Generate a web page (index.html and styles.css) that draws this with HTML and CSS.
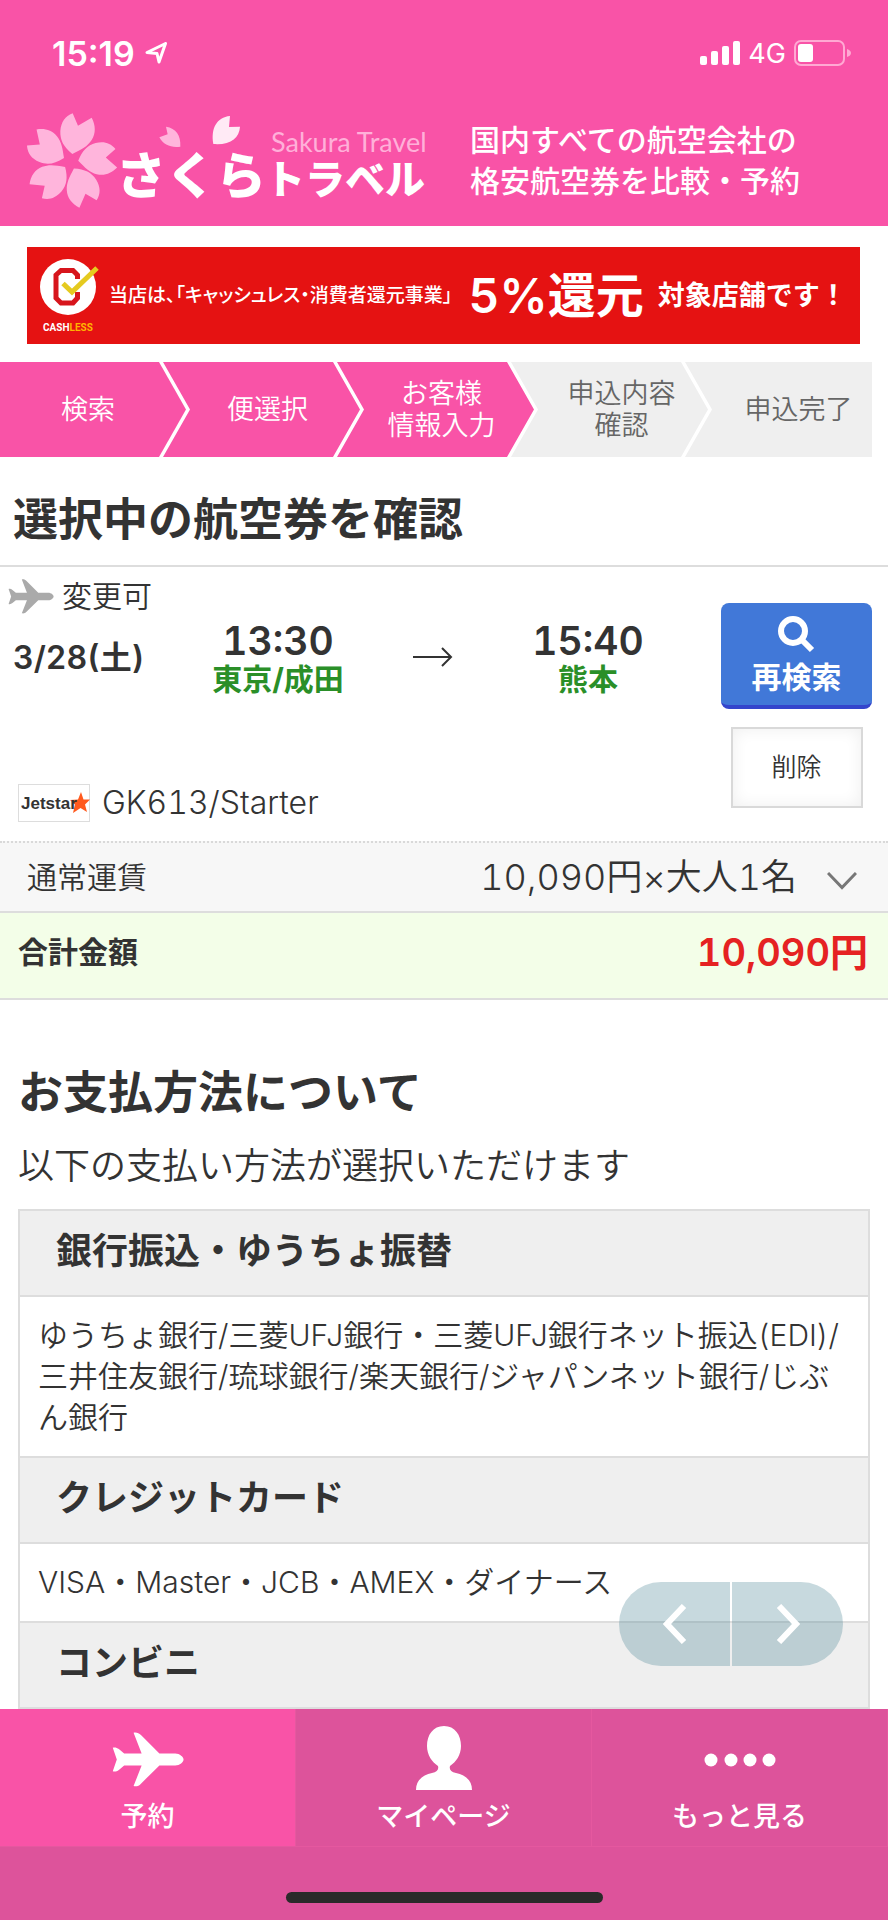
FILE: index.html
```html
<!DOCTYPE html>
<html lang="ja">
<head>
<meta charset="utf-8">
<meta name="viewport" content="width=device-width, initial-scale=1">
<title>さくらトラベル</title>
<link rel="stylesheet" href="styles.css">
</head>
<body>
<svg width="0" height="0" class="defs" aria-hidden="true">
  <symbol id="plane" viewBox="0 0 214 164">
    <path d="M64 2C72 0 80 3 86 9L141 64H188C202 64 213 75 213 82S202 100 188 100H141L86 154C80 161 72 163 64 161L88 100H36L20 113C14 118 7 119 2 117L14 82L2 47C7 45 14 46 20 51L36 64H88Z"/>
  </symbol>
</svg>
<div class="status">
  <div class="status-left">
    <span class="clock">15:19</span>
    <svg class="location" viewBox="0 0 22 22"><path d="M2 10.500 20.500 1.500 14 20 12 11.500Z"/></svg>
  </div>
  <div class="status-right">
    <svg class="signal" viewBox="0 0 40 24"><rect x="0" y="15" width="7" height="9" rx="2"/><rect x="11" y="10" width="7" height="14" rx="2"/><rect x="22" y="5" width="7" height="19" rx="2"/><rect x="33" y="0" width="7" height="24" rx="2"/></svg>
    <span class="carrier">4G</span>
    <svg class="battery" viewBox="0 0 57 26"><rect x="1" y="1" width="49" height="24" rx="6"/><rect class="charge" x="4" y="4" width="15" height="18" rx="3"/><path class="cap" d="M53 9C55.500 10 57 11 57 13S55.500 16 53 17Z"/></svg>
  </div>
</div>
<header class="header">
  <a class="logo" href="#">
    <svg viewBox="0 0 406 104" role="img" aria-label="さくらトラベル Sakura Travel">
      <g fill="#ffb5dc" transform="translate(-27 -110) scale(.33333)">
        <path id="petal" d="M217 462C190 440 180 420 181 393C184 365 195 350 218 340L234 377L275 353C287 375 288 400 275 420C262 440 245 448 217 462Z"/>
        <use href="#petal" transform="rotate(72 212 485) translate(8 19) scale(.96)"/>
        <use href="#petal" transform="rotate(144 212 485) translate(8 19) scale(.96)"/>
        <use href="#petal" transform="rotate(216 212 485) translate(8 19) scale(.96)"/>
        <use href="#petal" transform="rotate(288 212 485) translate(8 19) scale(.96)"/>
        <path d="M498 380C528 385 543 405 541 440C515 444 490 436 478 412L503 403Z"/>
        <path fill="#ffeaf5" d="M690 348C650 352 632 385 640 432C690 436 718 415 720 380L687 381Z"/>
      </g>
      <text class="logo-main" x="89" y="84">さくら</text>
      <text class="logo-sub" x="238" y="84">トラベル</text>
      <text class="logo-latin" x="244" y="42">Sakura Travel</text>
    </svg>
  </a>
  <p class="tagline">国内すべての航空会社の<br>格安航空券を比較・予約</p>
</header>
<main class="main">
  <a class="banner" href="#">
    <svg class="cashless" viewBox="0 0 62 76" role="img" aria-label="CASHLESS">
      <circle cx="29" cy="29" r="28" fill="#fff"/>
      <path d="M38.500 21V17L34 12.500H22L17 17V40L22 45H34L38.500 40V34" fill="none" stroke="#d7151c" stroke-width="5"/>
      <path d="M24 25.500 33 34 58 10" fill="none" stroke="#e5ca1f" stroke-width="5"/>
      <text class="cashless-text" x="4" y="73">CASH<tspan fill="#ffb400">LESS</tspan></text>
    </svg>
    <span class="banner-lead">当店は、「キャッシュレス・消費者還元事業」</span>
    <strong class="banner-rate">5%還元</strong>
    <span class="banner-tail">対象店舗です！</span>
  </a>
  <ol class="steps">
    <li class="step step-first">検索</li>
    <li class="step">便選択</li>
    <li class="step">お客様<br>情報入力</li>
    <li class="step step-todo">申込内容<br>確認</li>
    <li class="step step-todo step-last">申込完了</li>
  </ol>
  <h1 class="title">選択中の航空券を確認</h1>
  <section class="flight">
    <div class="flight-info">
      <p class="change"><svg class="change-icon"><use href="#plane"/></svg>変更可</p>
      <div class="route">
        <span class="date">3/28(土)</span>
        <div class="stop"><span class="time">13:30</span><span class="place">東京/成田</span></div>
        <svg class="arrow" viewBox="0 0 40 20"><path d="M0 10H38M29 1 38 10 29 19"/></svg>
        <div class="stop"><span class="time">15:40</span><span class="place">熊本</span></div>
      </div>
      <p class="carrier-row">
        <svg class="jetstar" viewBox="0 0 72 38" role="img" aria-label="Jetstar">
          <rect x=".5" y=".5" width="71" height="37" fill="#fff" stroke="#ddd"/>
          <path fill="#ff5a1e" d="M63 8 65.500 15.500 72 15.500 67 20.500 69 28 62.500 24 55 29 57 20.500 52 16 60 15.500Z"/>
          <text class="jetstar-text" x="3" y="25">Jetstar</text>
        </svg>
        GK613/Starter
      </p>
    </div>
    <div class="actions">
      <button class="research" type="button">
        <svg class="search-icon" viewBox="0 0 37 37"><circle cx="15" cy="15" r="12"/><path d="M24 24 34 34"/></svg>
        再検索
      </button>
      <button class="delete" type="button">削除</button>
    </div>
  </section>
  <button class="fare" type="button">
    <span>通常運賃</span>
    <span class="fare-value">10,090円×大人1名</span>
    <svg class="chevron" viewBox="0 0 30 18"><path d="M1 1 15 15.500 29 1"/></svg>
  </button>
  <div class="total"><span>合計金額</span><strong class="total-value">10,090円</strong></div>
  <section class="payment">
    <h2 class="payment-title">お支払方法について</h2>
    <p class="payment-lead">以下の支払い方法が選択いただけます</p>
    <dl class="methods">
      <dt>銀行振込・ゆうちょ振替</dt>
      <dd>ゆうちょ銀行/三菱UFJ銀行・三菱UFJ銀行ネット振込(EDI)/三井住友銀行/琉球銀行/楽天銀行/ジャパンネット銀行/じぶん銀行</dd>
      <dt>クレジットカード</dt>
      <dd>VISA・Master・JCB・AMEX・ダイナース</dd>
      <dt>コンビニ</dt>
    </dl>
  </section>
  <div class="pager">
    <button type="button" aria-label="前へ"><svg viewBox="0 0 24 40"><path d="M21 2 4 20 21 38"/></svg></button>
    <button type="button" aria-label="次へ"><svg viewBox="0 0 24 40"><path d="M3 2 20 20 3 38"/></svg></button>
  </div>
</main>
<nav class="nav">
  <a class="tab tab-active" href="#"><svg class="tab-icon" viewBox="0 0 72 66"><use href="#plane" y="6" width="72" height="55"/></svg>予約</a>
  <a class="tab" href="#"><svg class="tab-icon" viewBox="0 0 72 66"><path d="M36 0C47 0 53 9 53 20C53 29 48 36 42 40C41 44 43 46 48 47C57 49 64 54 64 64H8C8 54 15 49 24 47C29 46 31 44 30 40C24 36 19 29 19 20C19 9 25 0 36 0Z"/></svg>マイページ</a>
  <a class="tab" href="#"><svg class="tab-icon" viewBox="0 0 72 66"><circle cx="7" cy="34" r="6.500"/><circle cx="27" cy="34" r="6.500"/><circle cx="46" cy="34" r="6.500"/><circle cx="65" cy="34" r="6.500"/></svg>もっと見る</a>
</nav>
<div class="home"><span class="home-bar"></span></div>
</body>
</html>
```

FILE: styles.css
```css
* {
  box-sizing: border-box;
}

body {
  margin: 0;
  display: flex;
  flex-direction: column;
  height: 100vh;
  overflow: hidden;
  background: #fff;
  color: #333;
  font-family: Inter, "Noto Sans CJK JP", sans-serif;
  font-size: 30px;
  font-weight: 350;
  font-variant-numeric: tabular-nums;
  line-height: 41px;
}

p, h1, h2, ol, dl, dd {
  margin: 0;
  padding: 0;
}

a {
  color: inherit;
  text-decoration: none;
}

button {
  font: inherit;
  font-variant-numeric: inherit;
  color: inherit;
  border: 0;
  border-radius: 0;
  background: none;
  padding: 0;
  cursor: pointer;
}

svg {
  display: block;
  flex: none;
}

.defs {
  position: absolute;
}

/* Status bar */
.status {
  flex: none;
  display: flex;
  justify-content: space-between;
  align-items: center;
  height: 106px;
  padding: 0 37px 0 52px;
  background: #f953a7;
  color: #fff;
}

.status-left,
.status-right {
  display: flex;
  align-items: center;
}

.status-left {
  gap: 10px;
}

.status-right {
  gap: 8px;
}

.clock {
  font-size: 34px;
  font-weight: 600;
  font-variant-numeric: normal;
}

.carrier {
  font-size: 27px;
  font-weight: 400;
}

.location {
  width: 22px;
  height: 22px;
  fill: none;
  stroke: #fff;
  stroke-width: 3;
  stroke-linejoin: round;
}

.signal {
  width: 40px;
  height: 24px;
  fill: #fff;
}

.battery {
  width: 57px;
  height: 26px;
  fill: none;
  stroke: #ffa9d3;
  stroke-width: 2;
}

.battery .charge {
  fill: #fff;
  stroke: none;
}

.battery .cap {
  fill: #ffa9d3;
  stroke: none;
}

/* Header */
.header {
  flex: none;
  display: flex;
  gap: 37px;
  height: 120px;
  padding: 4px 27px 0;
  background: #f953a7;
  color: #fff;
}

.logo svg {
  width: 406px;
  height: 104px;
}

.logo text {
  fill: #fff;
  font-family: "Noto Sans CJK JP", sans-serif;
  font-weight: 900;
}

.logo .logo-main {
  font-size: 50px;
}

.logo .logo-sub {
  font-size: 40px;
}

.logo .logo-latin {
  fill: #ffb0d9;
  font-family: Lato, sans-serif;
  font-size: 27px;
  font-weight: 400;
}

.tagline {
  padding-top: 10px;
  font-weight: 500;
}

/* Main */
.main {
  flex: 1;
  min-height: 0;
  position: relative;
  overflow: hidden;
  padding-top: 21px;
}

.banner {
  display: flex;
  align-items: center;
  height: 97px;
  margin: 0 28px 18px 27px;
  padding: 0 12px;
  background: #e51212;
  color: #fff;
  white-space: nowrap;
  font-weight: 500;
}

.cashless {
  width: 62px;
  height: 76px;
}

.cashless-text {
  fill: #fff;
  font-family: Roboto, sans-serif;
  font-size: 10px;
  font-weight: 700;
}

.banner-lead {
  margin-left: 8px;
  font-size: 19px;
  font-feature-settings: "palt";
}

.banner-rate {
  margin-left: 16px;
  font-size: 48px;
  font-weight: 600;
}

.banner-tail {
  margin-left: 14px;
  font-size: 27px;
  font-weight: 700;
}

.steps {
  display: flex;
  margin-right: 16px;
  list-style: none;
  font-size: 27px;
  line-height: 32px;
  text-align: center;
}

.step {
  flex: 1 1 197px;
  display: flex;
  align-items: center;
  justify-content: center;
  height: 95px;
  margin-left: -23px;
  padding-left: 12px;
  background: #f953a7;
  color: #fff;
  clip-path: polygon(0 0, calc(100% - 27px) 0, 100% 50%, calc(100% - 27px) 100%, 0 100%, 27px 50%);
}

.step-first {
  flex-basis: 186px;
  margin-left: 0;
  padding: 0 10px 0 0;
  clip-path: polygon(0 0, calc(100% - 27px) 0, 100% 50%, calc(100% - 27px) 100%, 0 100%);
}

.step-todo {
  padding-left: 24px;
  background: #efefef;
  color: #666;
}

.step-last {
  flex-basis: 187px;
  padding-left: 40px;
  clip-path: polygon(0 0, 100% 0, 100% 100%, 0 100%, 27px 50%);
}

.title {
  padding: 33px 13px 15px;
  border-bottom: 2px solid #ddd;
  font-size: 45px;
  line-height: 60px;
}

.flight {
  display: flex;
  justify-content: space-between;
  height: 274px;
  padding-right: 16px;
}

.flight-info {
  flex: 1;
  display: flex;
  flex-direction: column;
}

.change {
  display: flex;
  align-items: center;
  gap: 8px;
  padding: 9px 8px 0;
}

.change-icon {
  width: 46px;
  height: 35px;
  fill: #aaa;
}

.route {
  display: grid;
  grid-template-columns: 180px 170px 1fr 170px 48px;
  align-items: center;
  padding-left: 13px;
}

.date {
  font-size: 32px;
  font-weight: 600;
}

.stop {
  display: flex;
  flex-direction: column;
  align-items: center;
  padding-top: 3px;
}

.time {
  font-size: 39px;
  font-weight: 600;
}

.place {
  color: #2a8f28;
  font-weight: 700;
  line-height: 36px;
}

.arrow {
  justify-self: center;
  width: 40px;
  height: 20px;
  fill: none;
  stroke: #333;
  stroke-width: 2;
}

.carrier-row {
  display: flex;
  align-items: center;
  gap: 12px;
  margin-top: auto;
  padding: 0 18px 18px;
  font-size: 32px;
}

.jetstar {
  width: 72px;
  height: 38px;
}

.jetstar-text {
  fill: #333;
  font-family: "Liberation Sans", sans-serif;
  font-size: 17px;
  font-weight: 700;
}

.actions {
  display: flex;
  flex-direction: column;
  align-items: center;
  gap: 18px;
  width: 151px;
  padding-top: 36px;
}

.research {
  display: flex;
  flex-direction: column;
  align-items: center;
  gap: 4px;
  width: 151px;
  height: 106px;
  padding-top: 13px;
  border-bottom: 4px solid #3445cc;
  border-radius: 8px;
  background: #4178d8;
  color: #fff;
  font-weight: 700;
}

.search-icon {
  width: 37px;
  height: 37px;
  fill: none;
  stroke: #fff;
  stroke-width: 6;
}

.delete {
  width: 132px;
  height: 81px;
  border: 2px solid #d9d9d9;
  box-shadow: inset 0 0 16px #eee;
  font-size: 25px;
}

.fare {
  display: flex;
  align-items: center;
  width: 100%;
  height: 72px;
  padding: 0 31px 0 27px;
  border-top: 2px dotted #d9d9d9;
  border-bottom: 2px solid #ddd;
  background: #f7f7f7;
}

.fare-value {
  margin-left: auto;
  font-size: 36px;
}

.chevron {
  width: 30px;
  height: 18px;
  margin: 8px 0 0 30px;
  fill: none;
  stroke: #777;
  stroke-width: 3;
}

.total {
  display: flex;
  justify-content: space-between;
  align-items: center;
  height: 87px;
  padding: 0 20px 6px 18px;
  border-bottom: 2px solid #ddd;
  background: #f3fee8;
  font-weight: 700;
}

.total-value {
  color: #e52222;
  font-size: 38px;
  font-weight: 600;
}

.payment {
  padding: 63px 18px 0;
}

.payment-title {
  font-size: 45px;
  line-height: 60px;
}

.payment-lead {
  padding: 23px 0 22px;
  font-size: 36px;
}

.methods {
  border: 2px solid #ddd;
}

.methods dt {
  padding: 20px 36px 23px;
  background: #efefef;
  font-size: 36px;
  font-weight: 700;
}

.methods dd {
  padding: 18px;
  border: solid #ddd;
  border-width: 2px 0;
  line-break: anywhere;
}

.pager {
  position: absolute;
  right: 45px;
  bottom: 43px;
  display: flex;
  gap: 2px;
  width: 224px;
  height: 84px;
  border-radius: 42px;
  overflow: hidden;
}

.pager button {
  flex: 1;
  display: flex;
  align-items: center;
  justify-content: center;
  background: rgba(68, 128, 145, .3);
}

.pager svg {
  width: 24px;
  height: 40px;
  fill: none;
  stroke: #fff;
  stroke-width: 6;
}

/* Bottom navigation */
.nav {
  flex: none;
  display: flex;
  height: 138px;
  background: #dd539b;
  color: #fff;
}

.tab {
  flex: 1;
  display: flex;
  flex-direction: column;
  align-items: center;
  gap: 4px;
  padding-top: 17px;
  border-right: 1px solid #e5589f;
  border-bottom: 1px solid #e5589f;
  font-size: 27px;
  font-weight: 500;
}

.tab-active {
  background: #f953a7;
}

.tab-icon {
  width: 72px;
  height: 66px;
  fill: #fff;
}

.home {
  flex: none;
  display: flex;
  justify-content: center;
  height: 73px;
  padding-top: 45px;
  background: #dd539b;
}

.home-bar {
  width: 317px;
  height: 11px;
  border-radius: 6px;
  background: #2a2a2a;
}
```
